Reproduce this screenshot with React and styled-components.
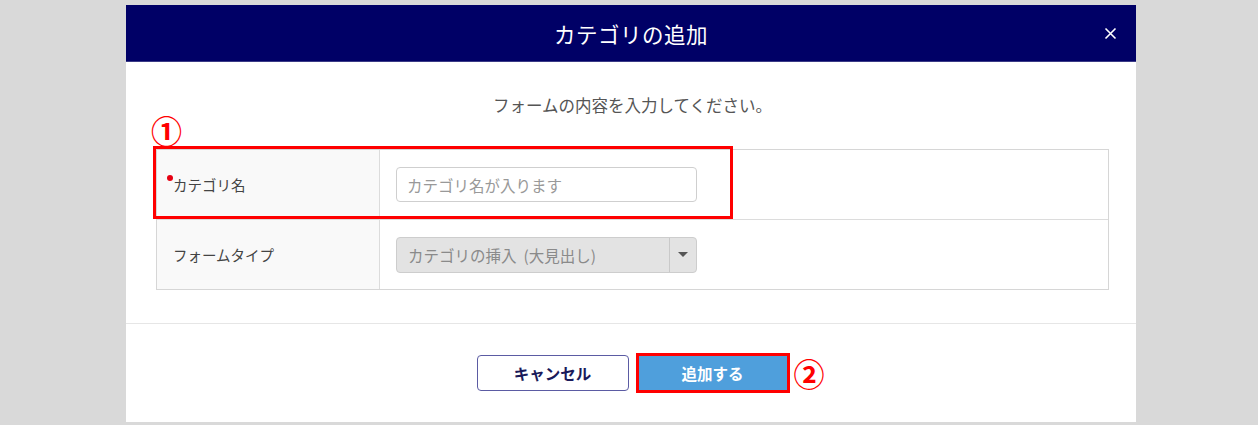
import React from "react";
import styled, { createGlobalStyle } from "styled-components";

const GlobalStyle = createGlobalStyle`
  html, body {
    margin: 0;
    padding: 0;
    background: #d9d9d9;
    font-family: "Noto Sans CJK JP", "Noto Sans", sans-serif;
  }
`;

// Page
const Page = styled.div`
  width: 1258px;
  height: 425px;
  padding-top: 5px;
  box-sizing: border-box;
  overflow: hidden;
`;

const Modal = styled.div`
  width: 1010px;
  margin-left: 126px;
  height: 417px;
  background: #fff;
  display: flex;
  flex-direction: column;
`;

// Header
const Header = styled.div`
  height: 57px;
  background: #000066;
  border-bottom: 1px solid #3a3a86;
  box-sizing: border-box;
  display: flex;
  align-items: center;
  justify-content: center;
  position: relative;
`;

const Title = styled.h2`
  margin: 0;
  font-size: 21.5px;
  font-weight: 400;
  color: #fff;
  letter-spacing: 0.5px;
`;

const Close = styled.button`
  position: absolute;
  right: 16px;
  top: 18px;
  width: 20px;
  height: 20px;
  padding: 0;
  border: none;
  background: none;
  display: flex;
  align-items: center;
  justify-content: center;
  cursor: pointer;
`;

// Body
const Body = styled.div`
  position: relative;
  padding: 33px 27px 33px 30px;
  border-bottom: 1px solid #e6e6e6;
  display: flex;
  flex-direction: column;
  align-items: stretch;
`;

const Lead = styled.p`
  margin: 0;
  text-align: center;
  font-size: 16.5px;
  line-height: 20px;
  color: #555;
`;

const FormTable = styled.div`
  margin-top: 34px;
  border: 1px solid #d6d6d6;
  display: grid;
  grid-template-columns: 223px 1fr;
`;

const LabelCell = styled.div`
  height: 69px;
  background: #f9f9f9;
  border-right: 1px solid #dcdcdc;
  border-bottom: ${(p) => (p.$last ? "none" : "1px solid #dcdcdc")};
  display: flex;
  align-items: center;
  padding-left: 16px;
  font-size: 14.5px;
  color: #444;
  position: relative;
`;

const ValueCell = styled.div`
  height: 69px;
  border-bottom: ${(p) => (p.$last ? "none" : "1px solid #dcdcdc")};
  display: flex;
  align-items: center;
  padding-left: 16px;
`;

const Required = styled.span`
  width: 6px;
  height: 6px;
  border-radius: 50%;
  background: #e60012;
  margin-right: 0;
  margin-left: -6px;
  align-self: flex-start;
  margin-top: 25px;
`;

const TextInput = styled.input`
  width: 301px;
  height: 35px;
  box-sizing: border-box;
  border: 1px solid #cfcfcf;
  border-radius: 4px;
  padding: 0 10px;
  font-family: inherit;
  font-size: 15.5px;
  color: #333;
  outline: none;
  &::placeholder {
    color: #999;
  }
`;

const Select = styled.div`
  width: 301px;
  height: 36px;
  box-sizing: border-box;
  border: 1px solid #cdcdcd;
  border-radius: 4px;
  background: #e3e3e3;
  display: flex;
  align-items: stretch;
`;

const SelectText = styled.span`
  flex: 1;
  display: flex;
  align-items: center;
  padding-left: 11px;
  font-size: 15.5px;
  color: #8a8a8a;
  white-space: pre;
`;

const SelectArrow = styled.span`
  width: 26px;
  border-left: 1px solid #c9c9c9;
  display: flex;
  align-items: center;
  justify-content: center;
  &::after {
    content: "";
    border-left: 5px solid transparent;
    border-right: 5px solid transparent;
    border-top: 5px solid #555;
  }
`;

// Annotations
const Marker = styled.span`
  position: absolute;
  color: #ff0000;
  font-size: 31px;
  font-weight: 700;
  line-height: 1;
  left: ${(p) => p.$left}px;
  top: ${(p) => p.$top}px;
`;

const Highlight = styled.div`
  position: absolute;
  border: 3px solid #ff0000;
  box-sizing: border-box;
  pointer-events: none;
  left: 27px;
  top: 84px;
  width: 580px;
  height: 73px;
`;

// Footer
const Footer = styled.div`
  flex: 1;
  display: flex;
  align-items: center;
  justify-content: center;
  gap: 7px;
  padding-left: 4px;
`;

const CancelButton = styled.button`
  width: 152px;
  height: 36px;
  border: 1px solid #5b5ba3;
  border-radius: 4px;
  background: #fff;
  font-family: inherit;
  font-size: 15.5px;
  font-weight: 700;
  color: #1a1a5a;
  cursor: pointer;
`;

const AddWrap = styled.div`
  position: relative;
  border: 3px solid #ff0000;
`;

const AddButton = styled.button`
  display: block;
  width: 148px;
  height: 34px;
  border: none;
  background: #4f9fdc;
  font-family: inherit;
  font-size: 15.5px;
  font-weight: 700;
  color: #fff;
  cursor: pointer;
`;

const AddMarker = styled(Marker)`
  left: auto;
  top: 1px;
  right: -38px;
`;

export default function App() {
  return (
    <>
      <GlobalStyle />
      <Page>
        <Modal>
          <Header>
            <Title>カテゴリの追加</Title>
            <Close aria-label="close">
              <svg width="13" height="13" viewBox="0 0 13 13">
                <path d="M1.5 1.5 L11.5 11.5 M11.5 1.5 L1.5 11.5" stroke="#fff" strokeWidth="1.6" />
              </svg>
            </Close>
          </Header>

          <Body>
            <Lead>フォームの内容を入力してください。</Lead>
            <FormTable>
              <LabelCell>
                <Required />
                カテゴリ名
              </LabelCell>
              <ValueCell>
                <TextInput placeholder="カテゴリ名が入ります" />
              </ValueCell>
              <LabelCell $last>フォームタイプ</LabelCell>
              <ValueCell $last>
                <Select>
                  <SelectText>{"カテゴリの挿入  (大見出し)"}</SelectText>
                  <SelectArrow />
                </Select>
              </ValueCell>
            </FormTable>
            <Marker $left={25} $top={52}>①</Marker>
            <Highlight />
          </Body>

          <Footer>
            <CancelButton>キャンセル</CancelButton>
            <AddWrap>
              <AddButton>追加する</AddButton>
              <AddMarker>②</AddMarker>
            </AddWrap>
          </Footer>
        </Modal>
      </Page>
    </>
  );
}
